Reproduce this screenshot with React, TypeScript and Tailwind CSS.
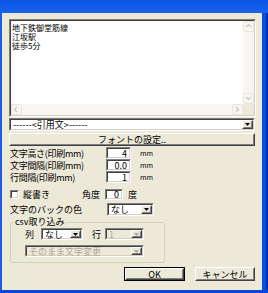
import React from 'react'

const FONT = "font-['Noto_Sans_CJK_JP','Noto_Sans_CJK_SC',sans-serif]"

type BoxProps = { className?: string; inner?: string; children?: React.ReactNode }

// classic 2px sunken edge (edit boxes, combos, text area)
function Sunken({ className = '', inner = 'bg-white', children }: BoxProps) {
  return (
    <div className={`flex border border-t-[#808080] border-l-[#808080] border-b-white border-r-white ${className}`}>
      <div className={`flex flex-1 min-w-0 border border-t-[#404040] border-l-[#404040] border-b-[#d4d0c8] border-r-[#d4d0c8] ${inner}`}>
        {children}
      </div>
    </div>
  )
}

// classic raised edge (buttons)
function Raised({ className = '', children }: BoxProps) {
  return (
    <div className={`flex border border-t-white border-l-white border-b-[#404040] border-r-[#404040] bg-[#ece9d8] ${className}`}>
      <div className="flex flex-1 items-center justify-center border border-t-[#ece9d8] border-l-[#ece9d8] border-b-[#808080] border-r-[#808080]">
        {children}
      </div>
    </div>
  )
}

function DownTri({ color = '#000' }: { color?: string }) {
  return (
    <svg width="5" height="3" viewBox="0 0 5 3">
      <polygon points="0,0 5,0 2.5,3" fill={color} />
    </svg>
  )
}

function Select({ text, className = '', disabled = false }: { text: string; className?: string; disabled?: boolean }) {
  return (
    <Sunken className={className} inner={disabled ? 'bg-[#ece9d8]' : 'bg-white'}>
      <div className={`flex flex-1 items-center pl-[2px] text-[9px] leading-none ${disabled ? 'text-[#aca899]' : ''}`}>{text}</div>
      <Raised className="w-[11px]">
        <DownTri color={disabled ? '#aca899' : '#000'} />
      </Raised>
    </Sunken>
  )
}

function NumInput({ value, className = '' }: { value: string; className?: string }) {
  return (
    <Sunken className={className}>
      <div className="flex flex-1 items-center justify-end pr-[2px] text-[9px] leading-none">{value}</div>
    </Sunken>
  )
}

function Chevron({ dir }: { dir: 'up' | 'down' | 'left' | 'right' }) {
  const pts = {
    up: '1,4 3.5,1.5 6,4',
    down: '1,2 3.5,4.5 6,2',
    left: '4,1 1.5,3.5 4,6',
    right: '2,1 4.5,3.5 2,6',
  }[dir]
  return (
    <svg width="7" height="7" viewBox="0 0 7 7">
      <polyline points={pts} fill="none" stroke="#c9c7ba" strokeWidth="1.2" />
    </svg>
  )
}

function ScrollBtn({ dir }: { dir: 'up' | 'down' | 'left' | 'right' }) {
  return (
    <div className="flex h-[11px] w-[11px] items-center justify-center rounded-[2px] border border-[#e8e6dc] bg-[#f7f6f1]">
      <Chevron dir={dir} />
    </div>
  )
}

function MmRow({ label, value }: { label: string; value: string }) {
  return (
    <div className="flex h-[12px] items-center pl-[1px]">
      <div className="w-[96px] text-[9px] leading-none tracking-[-0.3px]">{label}</div>
      <NumInput value={value} className="h-[12px] w-[25px]" />
      <div className="ml-[9px] text-[7px] leading-none">mm</div>
    </div>
  )
}

export default function App() {
  return (
    <div className={`flex h-[293px] w-[268px] flex-col overflow-hidden bg-[#ece9d8] text-black ${FONT}`}>
      {/* title bar (cropped) */}
      <div className="h-[13px] shrink-0 bg-gradient-to-b from-[#0654e4] to-[#1a62ec]" />

      <div className="flex min-h-0 flex-1">
        <div className="w-[2px] bg-[#1d5ce6]" />

        <div className="flex flex-1 flex-col pl-[7px] pr-[6px] pt-[6px]">
          {/* text area */}
          <Sunken className="h-[98px] w-[247px]">
            <div className="flex flex-1 flex-col">
              <div className="flex flex-1">
                <div className="flex-1 bg-white pl-[1px] pt-[2px] text-[8px] leading-[9px]">
                  <div>地下鉄御堂筋線</div>
                  <div>江坂駅</div>
                  <div>徒歩5分</div>
                </div>
                <div className="flex w-[11px] flex-col justify-between bg-[#f7f6f1]">
                  <ScrollBtn dir="up" />
                  <ScrollBtn dir="down" />
                </div>
              </div>
              <div className="flex h-[11px]">
                <div className="flex flex-1 justify-between bg-[#f7f6f1]">
                  <ScrollBtn dir="left" />
                  <ScrollBtn dir="right" />
                </div>
                <div className="w-[11px] bg-[#ece9d8]" />
              </div>
            </div>
          </Sunken>

          {/* quote combo */}
          <Select text="------<引用文>------" className="mt-[1px] h-[13px] w-[246px]" />

          <Raised className="mt-[2px] h-[13px] w-[246px]">
            <span className="text-[9px] leading-none">フォントの設定..</span>
          </Raised>

          <div className="mt-[1px] flex flex-col">
            <MmRow label="文字高さ(印刷mm)" value="4" />
            <MmRow label="文字間隔(印刷mm)" value="0.0" />
            <MmRow label="行間隔(印刷mm)" value="1" />
          </div>

          {/* vertical writing + angle */}
          <div className="mt-[6px] flex h-[11px] items-center pl-[1px] text-[9px] leading-none">
            <div className="flex w-[72px] items-center">
              <Sunken className="h-[9px] w-[9px]" />
              <span className="ml-[4px]">縦書き</span>
            </div>
            <span className="w-[23px]">角度</span>
            <NumInput value="0" className="h-[11px] w-[18px]" />
            <span className="ml-[5px]">度</span>
          </div>

          {/* back colour */}
          <div className="mt-[3px] flex h-[13px] items-center pl-[1px]">
            <div className="w-[97px] text-[9px] leading-none">文字のバックの色</div>
            <Select text="なし" className="h-[13px] w-[47px]" />
          </div>

          {/* csv import group */}
          <fieldset className="ml-[1px] mt-[1px] w-[155px] rounded-[3px] border border-[#d0d0bf] pb-[5px]">
            <legend className="ml-[3px] px-[1px] text-[9px] leading-[10px]">csv取り込み</legend>
            <div className="pl-[14px]">
              <div className="mt-[1px] flex h-[12px] items-center">
                <span className="w-[16px] text-[9px] leading-none">列</span>
                <Select text="なし" className="h-[12px] w-[42px]" />
                <span className="ml-[9px] w-[13px] text-[9px] leading-none">行</span>
                <Select text="1" disabled className="h-[12px] w-[39px]" />
              </div>
              <Select text="そのまま文字変更" disabled className="mt-[5px] h-[12px] w-[119px]" />
            </div>
          </fieldset>

          {/* OK / cancel */}
          <div className="mt-[4px] flex justify-end gap-[10px] pr-[1px]">
            <div className="border border-black">
              <Raised className="h-[12px] w-[59px]">
                <span className="text-[9px] leading-none">OK</span>
              </Raised>
            </div>
            <Raised className="h-[14px] w-[60px]">
              <span className="text-[9px] leading-none">キャンセル</span>
            </Raised>
          </div>
        </div>

        <div className="flex w-[6px]">
          <div className="flex-1 bg-[#0b4fdc]" />
          <div className="w-[2px] bg-[#0135b0]" />
        </div>
      </div>

      <div className="h-[3px] shrink-0 bg-[#0b46d6]" />
    </div>
  )
}
